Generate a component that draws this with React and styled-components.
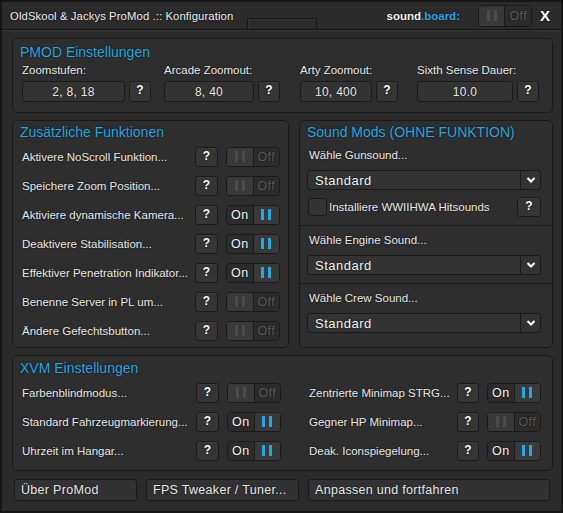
import React from 'react';
import styled, { createGlobalStyle } from 'styled-components';

const blue = '#26a6e2';
const edge = '#1a1a1a';

const GlobalStyle = createGlobalStyle`
  html, body {
    margin: 0;
    padding: 0;
    background: #1e1e1e;
  }
  body {
    font-family: 'Liberation Sans', Arial, sans-serif;
  }
  * {
    box-sizing: border-box;
  }
`;

const Window = styled.div`
  width: 563px;
  height: 513px;
  background: #2b2b2b;
  border: 2px solid #171717;
  display: flex;
  flex-direction: column;
  color: #e8e8e8;
  font-size: 11.5px;
  text-shadow: 0 0 2px rgba(0, 0, 0, 0.7);
`;

const TitleBar = styled.div`
  height: 28px;
  flex-shrink: 0;
  display: grid;
  grid-template-columns: 1fr auto 1fr;
  border-bottom: 1px solid #151515;
  box-shadow: 0 1px 0 #363636;
`;

const TitleText = styled.div`
  align-self: center;
  padding-left: 8px;
  font-size: 11.3px;
  letter-spacing: 0.1px;
  color: #ececec;
  white-space: nowrap;
`;

const DragTab = styled.div`
  align-self: end;
  width: 70px;
  height: 11px;
  border: 1px solid #181818;
  border-bottom: none;
  box-shadow: inset 1px 1px 0 #353535;
`;

const TitleRight = styled.div`
  justify-self: end;
  display: flex;
  align-items: center;
  padding-right: 11px;
`;

const SoundLabel = styled.span`
  font-weight: bold;
  font-size: 11.5px;
  color: #f0f0f0;
  margin-right: 10px;
  span {
    color: ${blue};
  }
`;

const CloseX = styled.span`
  margin-left: 8px;
  font-weight: bold;
  font-size: 15px;
  color: #ffffff;
`;

const Content = styled.div`
  flex: 1;
  display: flex;
  flex-direction: column;
  gap: 7px;
  padding: 8px 8px 0 10px;
`;

const Panel = styled.div`
  background: #2e2e2e;
  border: 1px solid ${edge};
  border-radius: 5px;
  padding-bottom: ${p => p.$pb || 0}px;
  display: flex;
  flex-direction: column;
`;

const PanelTitle = styled.div`
  color: ${blue};
  font-size: 14px;
  line-height: 18px;
  padding: ${p => p.$top || 2}px 0 0 7px;
`;

const Fields = styled.div`
  display: flex;
  padding-left: 9px;
  margin-top: 2px;
`;

const FieldCol = styled.div`
  width: ${p => p.$w}px;
  display: flex;
  flex-direction: column;
  gap: 4px;
`;

const FieldLabel = styled.div`
  line-height: 14px;
`;

const FieldRow = styled.div`
  display: flex;
  align-items: center;
  gap: 4px;
`;

const InputBox = styled.div`
  width: ${p => p.$w}px;
  height: 21px;
  background: #333333;
  border: 1px solid ${edge};
  border-radius: 3px;
  display: flex;
  align-items: center;
  justify-content: center;
  font-size: 12px;
  letter-spacing: 0.3px;
`;

const Help = styled.div`
  width: ${p => p.$w || 23}px;
  height: ${p => p.$h || 20}px;
  flex-shrink: 0;
  background: #353535;
  border: 1px solid ${edge};
  border-radius: 3px;
  box-shadow: inset 0 1px 0 #3d3d3d;
  display: flex;
  justify-content: center;
  padding-top: 1px;
  font-size: 12px;
  font-weight: bold;
  color: #fff;
`;

const Middle = styled.div`
  display: flex;
  gap: 10px;
`;

const LeftPanel = styled(Panel)`
  width: 277px;
  flex-shrink: 0;
`;

const RightPanel = styled(Panel)`
  flex: 1;
`;

const Rows = styled.div`
  padding-top: 1px;
`;

const Row = styled.div`
  height: 29px;
  display: flex;
  align-items: center;
  padding: 0 ${p => p.$pr || 8}px 0 ${p => p.$pl || 9}px;
`;

const RowLabel = styled.div`
  flex: 1;
  white-space: nowrap;
`;

const ToggleBox = styled.div`
  width: 54px;
  height: ${p => p.$h || 20}px;
  margin-left: 8px;
  display: flex;
  border: 1px solid ${edge};
  border-radius: 4px;
  overflow: hidden;
  flex-shrink: 0;
`;

const Half = styled.div`
  flex: 1;
  display: flex;
  align-items: center;
  justify-content: center;
  background: ${p => (p.$light ? '#393939' : '#2c2c2c')};
  font-size: 12.5px;
  letter-spacing: 0.3px;
  color: ${p => p.$c || '#f2f2f2'};
  & + & {
    border-left: 1px solid ${edge};
  }
`;

const Bars = styled.span`
  display: flex;
  gap: 4px;
  &::before,
  &::after {
    content: '';
    width: 3px;
    height: 11px;
    background: ${p => p.$c};
  }
`;

function Toggle({ on, h }) {
  if (on) {
    return (
      <ToggleBox $h={h}>
        <Half>On</Half>
        <Half $light>
          <Bars $c={blue} />
        </Half>
      </ToggleBox>
    );
  }
  return (
    <ToggleBox $h={h}>
      <Half $light>
        <Bars $c="#4b4b4b" />
      </Half>
      <Half $c="#5a5a5a">Off</Half>
    </ToggleBox>
  );
}

const Section = styled.div`
  display: flex;
  flex-direction: column;
  gap: 7px;
  padding: 6px 11px 8px 7px;
  & + & {
    border-top: 1px solid ${edge};
  }
`;

const SectionLabel = styled.div`
  line-height: 16px;
  padding-left: 2px;
`;

const SelectBox = styled.div`
  height: 20px;
  display: flex;
  background: #333333;
  border: 1px solid ${edge};
  border-radius: 3px;
`;

const SelectText = styled.div`
  flex: 1;
  display: flex;
  align-items: center;
  padding-left: 7px;
  font-size: 13px;
  letter-spacing: 0.5px;
  color: #f2f2f2;
`;

const Chevron = styled.div`
  width: 20px;
  border-left: 1px solid ${edge};
  display: flex;
  align-items: center;
  justify-content: center;
`;

const CheckRow = styled.div`
  display: flex;
  align-items: center;
  height: 20px;
`;

const CheckBox = styled.div`
  width: 19px;
  height: 18px;
  background: #333333;
  border: 1px solid ${edge};
  border-radius: 3px;
  margin-left: 1px;
  margin-right: 2px;
`;

function Select() {
  return (
    <SelectBox>
      <SelectText>Standard</SelectText>
      <Chevron>
        <svg width="10" height="6" viewBox="0 0 10 6">
          <polyline points="1.5,1 5,4.5 8.5,1" fill="none" stroke="#fff" strokeWidth="2" />
        </svg>
      </Chevron>
    </SelectBox>
  );
}

const XvmGrid = styled.div`
  display: grid;
  grid-template-columns: 276px 1fr;
  column-gap: 10px;
`;

const Buttons = styled.div`
  display: flex;
  gap: 8px;
  padding: 1px 3px 0 2px;
`;

const Button = styled.div`
  width: ${p => (p.$w ? `${p.$w}px` : 'auto')};
  flex: ${p => (p.$w ? 'none' : 1)};
  height: 22px;
  display: flex;
  align-items: center;
  padding-left: 6px;
  background: #323232;
  border: 1px solid ${edge};
  border-radius: 3px;
  font-size: 12.5px;
  letter-spacing: 0.3px;
  & + & {
    margin-left: ${p => p.$ml || 0}px;
  }
`;

const pmodFields = [
  { label: 'Zoomstufen:', value: '2, 8, 18', col: 142, w: 103 },
  { label: 'Arcade Zoomout:', value: '8, 40', col: 136, w: 90 },
  { label: 'Arty Zoomout:', value: '10, 400', col: 117, w: 72 },
  { label: 'Sixth Sense Dauer:', value: '10.0', col: 130, w: 96 },
];

const extras = [
  ['Aktivere NoScroll Funktion...', false],
  ['Speichere Zoom Position...', false],
  ['Aktiviere dynamische Kamera...', true],
  ['Deaktivere Stabilisation...', true],
  ['Effektiver Penetration Indikator...', true],
  ['Benenne Server in PL um...', false],
  ['Ändere Gefechtsbutton...', false],
];

const xvmLeft = [
  ['Farbenblindmodus...', false],
  ['Standard Fahrzeugmarkierung...', true],
  ['Uhrzeit im Hangar...', true],
];

const xvmRight = [
  ['Zentrierte Minimap STRG...', true],
  ['Gegner HP Minimap...', false],
  ['Deak. Iconspiegelung...', true],
];

export default function App() {
  return (
    <>
      <GlobalStyle />
      <Window>
        <TitleBar>
          <TitleText>OldSkool &amp; Jackys ProMod .:: Konfiguration</TitleText>
          <DragTab />
          <TitleRight>
            <SoundLabel>
              sound<span>.board:</span>
            </SoundLabel>
            <Toggle on={false} h={22} />
            <CloseX>X</CloseX>
          </TitleRight>
        </TitleBar>

        <Content>
          <Panel $pb={10}>
            <PanelTitle $top={4}>PMOD Einstellungen</PanelTitle>
            <Fields>
              {pmodFields.map(f => (
                <FieldCol key={f.label} $w={f.col}>
                  <FieldLabel>{f.label}</FieldLabel>
                  <FieldRow>
                    <InputBox $w={f.w}>{f.value}</InputBox>
                    <Help $w={22} $h={21}>?</Help>
                  </FieldRow>
                </FieldCol>
              ))}
            </Fields>
          </Panel>

          <Middle>
            <LeftPanel $pb={2}>
              <PanelTitle $top={2}>Zusätzliche Funktionen</PanelTitle>
              <Rows>
                {extras.map(([label, on]) => (
                  <Row key={label}>
                    <RowLabel>{label}</RowLabel>
                    <Help>?</Help>
                    <Toggle on={on} />
                  </Row>
                ))}
              </Rows>
            </LeftPanel>

            <RightPanel>
              <PanelTitle $top={2}>Sound Mods (OHNE FUNKTION)</PanelTitle>
              <Section>
                <SectionLabel>Wähle Gunsound...</SectionLabel>
                <Select />
                <CheckRow>
                  <CheckBox />
                  <RowLabel>Installiere WWIIHWA Hitsounds</RowLabel>
                  <Help $w={24}>?</Help>
                </CheckRow>
              </Section>
              <Section>
                <SectionLabel>Wähle Engine Sound...</SectionLabel>
                <Select />
              </Section>
              <Section>
                <SectionLabel>Wähle Crew Sound...</SectionLabel>
                <Select />
              </Section>
            </RightPanel>
          </Middle>

          <Panel $pb={5}>
            <PanelTitle $top={3}>XVM Einstellungen</PanelTitle>
            <XvmGrid>
              <Rows>
                {xvmLeft.map(([label, on]) => (
                  <Row key={label}>
                    <RowLabel>{label}</RowLabel>
                    <Help>?</Help>
                    <Toggle on={on} />
                  </Row>
                ))}
              </Rows>
              <Rows>
                {xvmRight.map(([label, on]) => (
                  <Row key={label} $pl={10} $pr={11}>
                    <RowLabel>{label}</RowLabel>
                    <Help $w={22}>?</Help>
                    <Toggle on={on} />
                  </Row>
                ))}
              </Rows>
            </XvmGrid>
          </Panel>

          <Buttons>
            <Button $w={123}>Über ProMod</Button>
            <Button $w={153}>FPS Tweaker / Tuner...</Button>
            <Button $ml={1}>Anpassen und fortfahren</Button>
          </Buttons>
        </Content>
      </Window>
    </>
  );
}
